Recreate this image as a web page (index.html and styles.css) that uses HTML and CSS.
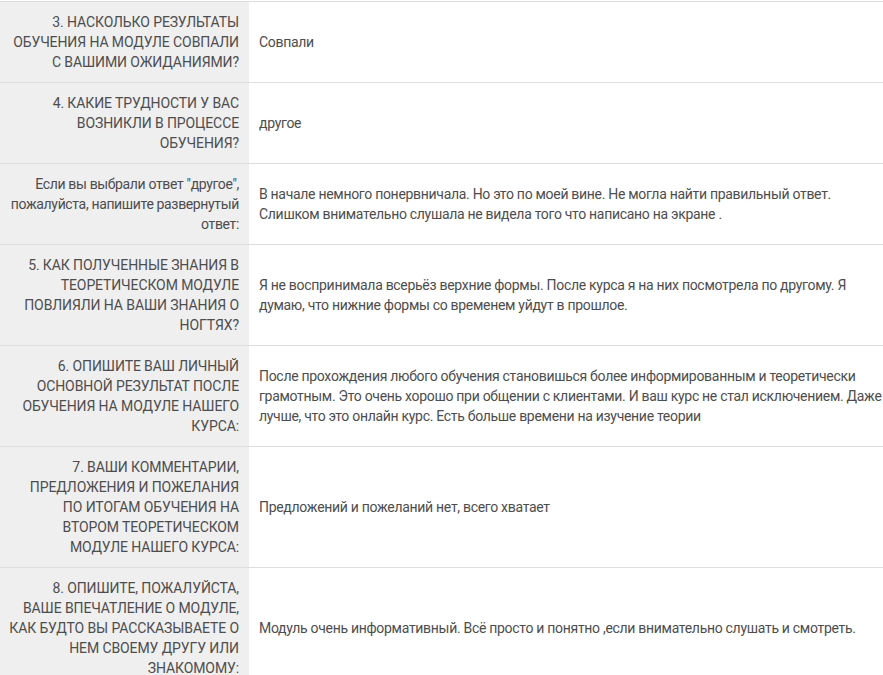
FILE: index.html
```html
<!DOCTYPE html>
<html lang="ru">
<head>
    <meta charset="UTF-8">
    <meta name="viewport" content="width=device-width, initial-scale=1.0">
    <title>Результаты анкеты</title>
    <link rel="stylesheet" href="styles.css">
</head>
<body>
    <div class="results">
        <table class="answers">
            <colgroup>
                <col class="col-question">
                <col class="col-answer">
            </colgroup>
            <tr>
                <th>3. НАСКОЛЬКО РЕЗУЛЬТАТЫ<br>ОБУЧЕНИЯ НА МОДУЛЕ СОВПАЛИ<br>С ВАШИМИ ОЖИДАНИЯМИ?</th>
                <td>Совпали</td>
            </tr>
            <tr>
                <th>4. КАКИЕ ТРУДНОСТИ У ВАС<br>ВОЗНИКЛИ В ПРОЦЕССЕ<br>ОБУЧЕНИЯ?</th>
                <td>другое</td>
            </tr>
            <tr>
                <th class="note">Если вы выбрали ответ "другое", пожалуйста, напишите развернутый ответ:</th>
                <td>В начале немного понервничала. Но это по моей вине. Не могла найти правильный ответ.<br>Слишком внимательно слушала не видела того что написано на экране .</td>
            </tr>
            <tr>
                <th>5. КАК ПОЛУЧЕННЫЕ ЗНАНИЯ В<br>ТЕОРЕТИЧЕСКОМ МОДУЛЕ<br>ПОВЛИЯЛИ НА ВАШИ ЗНАНИЯ О<br>НОГТЯХ?</th>
                <td>Я не воспринимала всерьёз верхние формы. После курса я на них посмотрела по другому. Я<br>думаю, что нижние формы со временем уйдут в прошлое.</td>
            </tr>
            <tr>
                <th>6. ОПИШИТЕ ВАШ ЛИЧНЫЙ<br>ОСНОВНОЙ РЕЗУЛЬТАТ ПОСЛЕ<br>ОБУЧЕНИЯ НА МОДУЛЕ НАШЕГО<br>КУРСА:</th>
                <td>После прохождения любого обучения становишься более информированным и теоретически<br>грамотным. Это очень хорошо при общении с клиентами. И ваш курс не стал исключением. Даже<br>лучше, что это онлайн курс. Есть больше времени на изучение теории</td>
            </tr>
            <tr>
                <th>7. ВАШИ КОММЕНТАРИИ,<br>ПРЕДЛОЖЕНИЯ И ПОЖЕЛАНИЯ<br>ПО ИТОГАМ ОБУЧЕНИЯ НА<br>ВТОРОМ ТЕОРЕТИЧЕСКОМ<br>МОДУЛЕ НАШЕГО КУРСА:</th>
                <td>Предложений и пожеланий нет, всего хватает</td>
            </tr>
            <tr>
                <th>8. ОПИШИТЕ, ПОЖАЛУЙСТА,<br>ВАШЕ ВПЕЧАТЛЕНИЕ О МОДУЛЕ,<br>КАК БУДТО ВЫ РАССКАЗЫВАЕТЕ О<br>НЕМ СВОЕМУ ДРУГУ ИЛИ<br>ЗНАКОМОМУ:</th>
                <td>Модуль очень информативный. Всё просто и понятно ,если внимательно слушать и смотреть.</td>
            </tr>
        </table>
    </div>
</body>
</html>
```

FILE: styles.css
```css
html, body {
    margin: 0;
    padding: 0;
    background-color: #fff;
}
body {
    font-family: Roboto, 'Noto Sans', sans-serif;
    font-size: 14px;
    line-height: 20px;
    color: #4d4d4d;
}
.results {
    overflow: hidden;
    padding-top: 1px;
}
.answers {
    border-collapse: collapse;
    table-layout: fixed;
    width: 905px;
}
.col-question {
    width: 249px;
}
.answers tr {
    border-top: 1px solid #dedede;
    border-bottom: 1px solid #dedede;
}
.answers th,
.answers td {
    padding: 10px;
    vertical-align: middle;
}
.answers th {
    background-color: #efefef;
    font-weight: 400;
    text-align: right;
    padding-left: 4px;
    letter-spacing: -0.1px;
}
.answers th.note {
    letter-spacing: -0.35px;
}
.answers td {
    text-align: left;
    letter-spacing: -0.3px;
}
```
